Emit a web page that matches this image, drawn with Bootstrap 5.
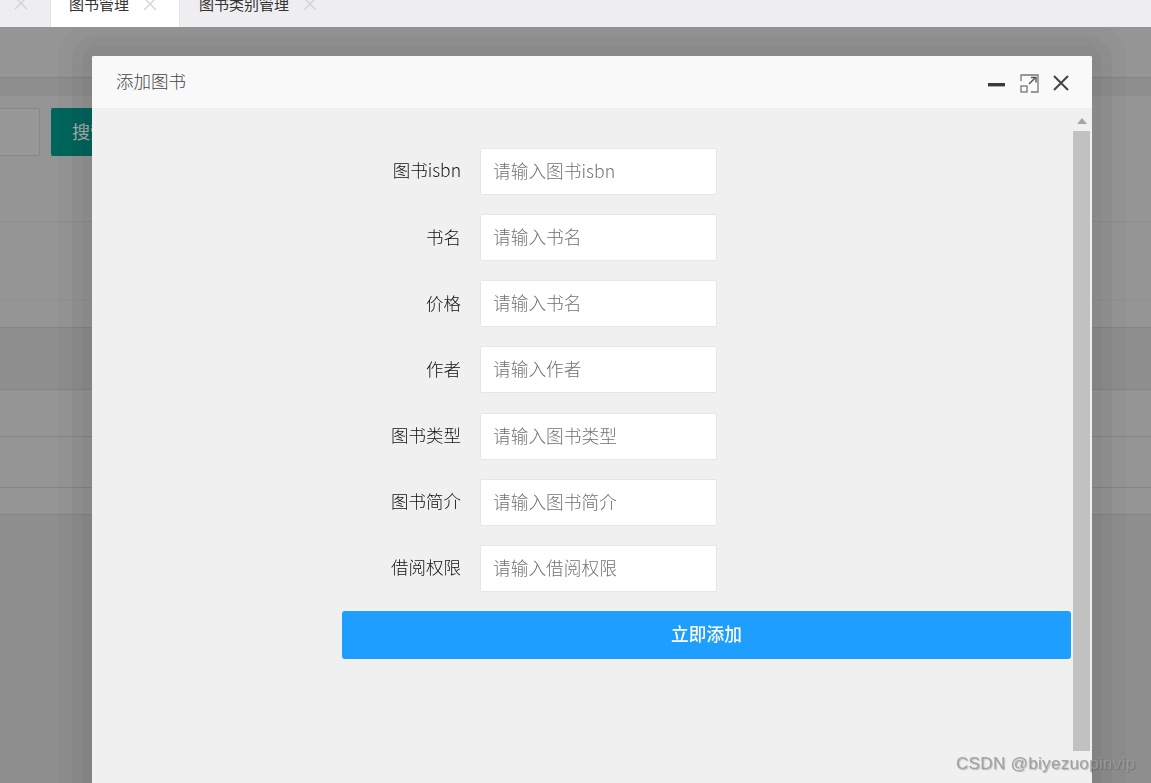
<!DOCTYPE html>
<html lang="zh-CN">
<head>
<meta charset="utf-8">
<title>添加图书</title>
<link href="https://cdn.jsdelivr.net/npm/bootstrap@5.3.0/dist/css/bootstrap.min.css" rel="stylesheet">
<style>
html,body{height:100%;overflow:hidden}
body{font-family:"Noto Sans CJK SC","Liberation Sans",sans-serif;background:#dcdcdc;color:#222}
.tabbar{height:27px;background:#eeeef0;overflow:hidden;padding-left:50px;position:relative;z-index:3}
.tabitem{height:28px;line-height:10px;font-size:15px;color:#333;padding:0 19px 0 19px;gap:14px;flex:none;margin-top:-1px}
.tabitem.on{background:#fff;border:1px solid #e6e6e6;border-top:0;width:130px;padding-left:18px;height:29px}
.tabclose{flex:none;margin-top:-2px}
.ghost-close{position:absolute;left:14px;top:-4px}
.pagehead{height:19px;margin-top:50px;background:#d2d2d2;border-top:1px solid #c4c4c4}
.searchrow{margin-top:12px;gap:11px}
.ghost-input{width:40px;height:48px;background:#e0e0e0;border:1px solid #c8c8c8;border-left:0;border-radius:0 2px 2px 0}
.ghost-btn{height:48px;width:130px;background:#009688;color:#fff;font-size:18px;border-radius:2px;padding-left:21px;line-height:46px}
.rule1{margin-top:65px;height:1px;background:#cfcfcf}
.rule2{margin-top:78px;height:1px;background:#d4d4d4}
.thead-band{margin-top:26px;height:63px;background:#d2d2d2;border-top:1px solid #c4c4c4;border-bottom:1px solid #c4c4c4}
.trow{border-bottom:1px solid #c4c4c4}
.trow.a{height:47px}
.trow.b{height:51px}
.tfoot-band{height:26px}
.pagerest{height:300px;background:#d2d2d2;border-top:1px solid #c4c4c4}
.veil{position:fixed;inset:27px 0 0 0;background:rgba(0,0,0,.32);z-index:1}
.halo{position:fixed;left:82px;top:46px;width:1020px;height:820px;z-index:1;border-radius:14px;background:rgba(0,0,0,.085);box-shadow:0 0 0 10px rgba(0,0,0,.03),0 0 0 24px rgba(0,0,0,.022)}
.dlg{position:fixed;left:92px;top:56px;width:1000px;height:800px;z-index:2;background:#f0f0f0;border-radius:2px 2px 0 0}
.dlg-head{height:53px;background:#f9f9f9;border-bottom:1px solid #eee;padding-left:24px;font-size:17.5px;font-weight:300;color:#444;line-height:50px;border-radius:2px 2px 0 0}
.dlg-tools{gap:14px;padding-right:23px;padding-top:9px}
.dlg-body{height:747px}
.dlg-form{padding:39px 2px 0 250px;width:981px;flex:none}
.frow{height:47px;margin-bottom:19.15px}
.flabel{width:138px;padding-right:19px;text-align:right;font-size:17.5px;font-weight:300;color:#111;margin:0 0 2px;flex:none}
.finput{width:237px;height:47px;border:1px solid #e6e6e6;border-radius:2px;background:#fff;padding:0 12px 3px;font-size:17.7px;font-weight:300;color:#333;outline:0}
.finput::placeholder{color:#707070;opacity:1}
.fsubmit{width:729px;height:48px;background:#1e9fff;color:#fff;border:0;border-radius:3px;font-size:17.7px;font-weight:500;padding:0 0 3px;display:block}
.sbar{width:17px;flex:none}
.sarrow{height:22px;padding-top:9px}
.sthumb{height:620px;background:#c1c1c1}
.wmark{position:fixed;left:956px;top:751px;font-family:"Liberation Sans",sans-serif;font-size:17px;letter-spacing:.34px;color:rgba(155,155,155,.9);text-shadow:1px 1px 1px rgba(70,70,70,.35);z-index:5;white-space:nowrap}
</style>
</head>
<body>
<div class="tabbar d-flex align-items-start">
  <svg class="ghost-close" width="14" height="14" viewBox="0 0 14 14"><path d="M1 1l12 12M13 1L1 13" stroke="#d2d2d2" stroke-width="1.3" fill="none"/></svg>
  <div class="tabitem on d-flex align-items-start"><span>图书管理</span><svg class="tabclose" width="14" height="14" viewBox="0 0 14 14"><path d="M1 1l12 12M13 1L1 13" stroke="#d2d2d2" stroke-width="1.3" fill="none"/></svg></div>
  <div class="tabitem d-flex align-items-start"><span>图书类别管理</span><svg class="tabclose" width="14" height="14" viewBox="0 0 14 14"><path d="M1 1l12 12M13 1L1 13" stroke="#d2d2d2" stroke-width="1.3" fill="none"/></svg></div>
</div>

<div class="pagehead"></div>
<div class="searchrow d-flex">
  <div class="ghost-input"></div>
  <div class="ghost-btn">搜索</div>
</div>
<div class="rule1"></div>
<div class="rule2"></div>
<div class="thead-band"></div>
<div class="trow a"></div>
<div class="trow b"></div>
<div class="tfoot-band"></div>
<div class="pagerest"></div>

<div class="veil"></div>
<div class="halo"></div>

<div class="dlg d-flex flex-column">
  <div class="dlg-head d-flex justify-content-between align-items-start">
    <span>添加图书</span>
    <div class="dlg-tools d-flex align-items-center">
      <svg width="18" height="36" viewBox="0 0 18 36"><rect x="0" y="18" width="17" height="3.4" fill="#3a3a3a"/></svg>
      <svg width="19" height="19" viewBox="0 0 19 19" fill="none"><path d="M1 7V1h17v17h-7" stroke="#777" stroke-width="1.3"/><rect x="1" y="12" width="6" height="6" stroke="#777" stroke-width="1.3"/><path d="M9 10l6.5-6.5" stroke="#555" stroke-width="1.4"/><path d="M11 3.5h5v5" stroke="#555" stroke-width="1.4"/></svg>
      <svg width="16" height="16" viewBox="0 0 16 16" fill="none"><path d="M1 1l14 14M15 1L1 15" stroke="#444" stroke-width="2"/></svg>
    </div>
  </div>
  <div class="dlg-body d-flex">
    <form class="dlg-form">
      <div class="frow d-flex align-items-center"><label class="flabel">图书isbn</label><input class="finput" placeholder="请输入图书isbn"></div>
      <div class="frow d-flex align-items-center"><label class="flabel">书名</label><input class="finput" placeholder="请输入书名"></div>
      <div class="frow d-flex align-items-center"><label class="flabel">价格</label><input class="finput" placeholder="请输入书名"></div>
      <div class="frow d-flex align-items-center"><label class="flabel">作者</label><input class="finput" placeholder="请输入作者"></div>
      <div class="frow d-flex align-items-center"><label class="flabel">图书类型</label><input class="finput" placeholder="请输入图书类型"></div>
      <div class="frow d-flex align-items-center"><label class="flabel">图书简介</label><input class="finput" placeholder="请输入图书简介"></div>
      <div class="frow d-flex align-items-center"><label class="flabel">借阅权限</label><input class="finput" placeholder="请输入借阅权限"></div>
      <button type="button" class="fsubmit">立即添加</button>
    </form>
    <div class="sbar">
      <div class="sarrow d-flex justify-content-center"><svg width="10" height="6" viewBox="0 0 10 6"><path d="M5 0l5 6H0z" fill="#a5a5a5"/></svg></div>
      <div class="sthumb"></div>
    </div>
  </div>
</div>

<div class="wmark">CSDN @biyezuopinvip</div>
<script src="https://cdn.jsdelivr.net/npm/bootstrap@5.3.0/dist/js/bootstrap.bundle.min.js"></script>
</body>
</html>
